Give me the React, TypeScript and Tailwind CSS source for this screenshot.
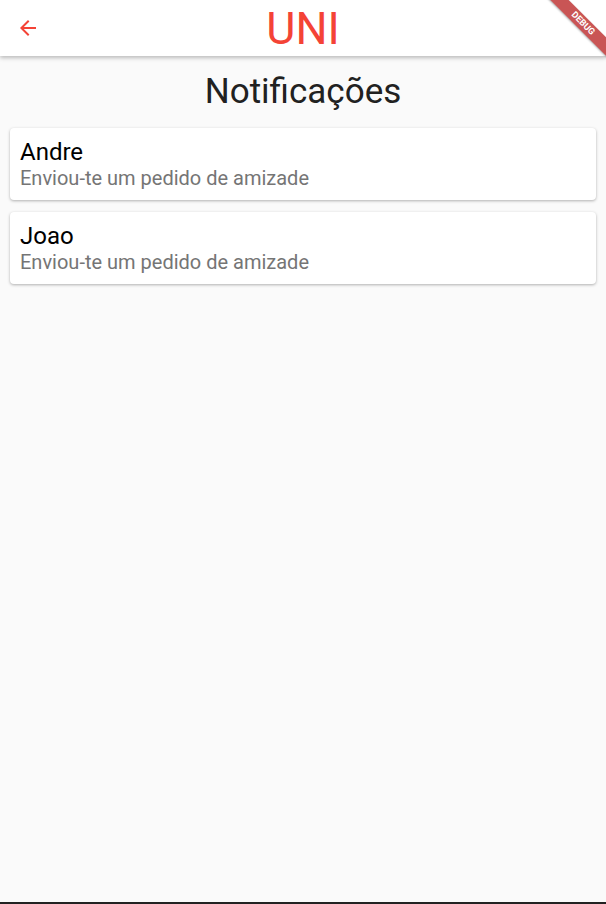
import React from "react";

const notifications = [
  { name: "Andre", text: "Enviou-te um pedido de amizade" },
  { name: "Joao", text: "Enviou-te um pedido de amizade" },
];

function DebugBanner() {
  return (
    <div className="pointer-events-none absolute right-0 top-0 h-[70px] w-[70px] overflow-hidden">
      <div className="absolute left-[-13px] top-[17px] flex h-[13px] w-[120px] rotate-45 items-center justify-center bg-[#b71c1c]/75 shadow-[0_1px_2px_rgba(0,0,0,0.3)]">
        <span className="text-[9px] font-bold leading-none text-white">DEBUG</span>
      </div>
    </div>
  );
}

export default function App() {
  return (
    <div
      className="relative flex h-[904px] w-full flex-col overflow-hidden bg-[#fafafa]"
      style={{ fontFamily: "Roboto, 'Noto Sans', sans-serif" }}
    >
      <header className="relative z-10 flex h-[56px] shrink-0 items-center bg-white shadow-[0_2px_4px_rgba(0,0,0,0.25)]">
        <button className="ml-[16px] flex h-[24px] w-[24px] items-center justify-center text-[#f44336]">
          <svg width="24" height="24" viewBox="0 0 24 24" fill="currentColor">
            <path d="M20 11H7.83l5.59-5.59L12 4l-8 8 8 8 1.41-1.41L7.83 13H20v-2z" />
          </svg>
        </button>
        <h1 className="absolute left-1/2 -translate-x-1/2 text-[45px] leading-none text-[#f44336]">UNI</h1>
        <DebugBanner />
      </header>

      <main className="flex flex-1 flex-col">
        <h2 className="mt-[14px] text-center text-[35px] leading-[44px] text-[#212121]">Notificações</h2>
        <div className="mt-[14px] flex flex-col gap-[12px] px-[10px]">
          {notifications.map((n) => (
            <div
              key={n.name}
              className="flex h-[72px] flex-col justify-center rounded-[4px] bg-white px-[10px] shadow-[0_1px_3px_rgba(0,0,0,0.3)]"
            >
              <div className="text-[24px] leading-[28px] text-black">{n.name}</div>
              <div className="text-[20px] leading-[24px] text-[#757575]">{n.text}</div>
            </div>
          ))}
        </div>
      </main>

      <div className="h-[2px] shrink-0 bg-[#222]" />
    </div>
  );
}
